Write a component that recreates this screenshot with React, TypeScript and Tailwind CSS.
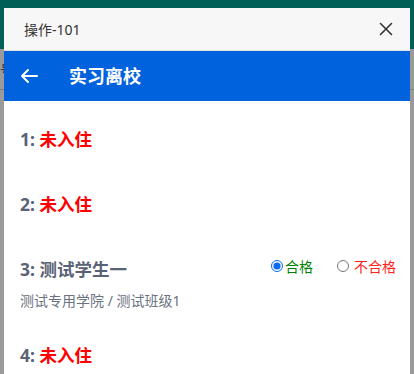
import React from "react";

const cjk = { fontFamily: '"Noto Sans", "Noto Sans CJK SC", sans-serif' };

function Row({ n, children, sub, right }: { n: number; children: React.ReactNode; sub?: string; right?: React.ReactNode }) {
  return (
    <div className={sub ? "pt-5 pb-3 border-b border-transparent" : "py-5 border-b border-transparent"}>
      <div className="flex items-center justify-between px-4">
        <div className="text-[17.5px] leading-6 font-bold text-[#596277]">
          {n}: {children}
        </div>
        {right}
      </div>
      {sub && <div className="mt-[11px] px-4 text-[14px] leading-[18px] text-[#6b7280]">{sub}</div>}
    </div>
  );
}

export default function App() {
  return (
    <div className="relative w-[414px] h-[374px] overflow-hidden bg-[#9a9a9a]" style={cjk}>
      <div className="h-[49px] bg-[#005f56]" />
      <div className="flex flex-col">
        <div className="h-[40px] flex items-center text-[14px] text-[#333]">号</div>
        <div className="h-px bg-[#7d7d7d]" />
      </div>
      <div className="absolute left-[4px] top-[8px] w-[406px] h-[400px] bg-white flex flex-col">
        <div className="h-[43px] bg-[#f7f7f7] border-b border-[#e2e2e2] flex items-center justify-between pl-5 pr-4">
          <span className="text-[14px] text-[#333]">操作-101</span>
          <svg width="14" height="14" viewBox="0 0 14 14" className="mr-[1px]">
            <path d="M1.5 1.5 L12.5 12.5 M12.5 1.5 L1.5 12.5" stroke="#333" strokeWidth="1.6" strokeLinecap="round" />
          </svg>
        </div>
        <div className="h-[50px] bg-[#0062dc] flex items-center pl-4">
          <svg width="18" height="16" viewBox="0 0 18 16">
            <path d="M17 8 H2 M8 2 L2 8 L8 14" stroke="white" strokeWidth="2" fill="none" strokeLinecap="round" strokeLinejoin="round" />
          </svg>
          <span className="ml-[31px] text-[18px] font-bold text-white">实习离校</span>
        </div>
        <div className="pt-[6px]">
          <Row n={1}><span className="text-[#ff0000]">未入住</span></Row>
          <Row n={2}><span className="text-[#ff0000]">未入住</span></Row>
          <Row
            n={3}
            sub="测试专用学院 / 测试班级1"
            right={
              <div className="flex items-center text-[14px] -mt-[6px] mr-[-2px]">
                <label className="flex items-center">
                  <input type="radio" name="r3" defaultChecked className="w-[12px] h-[12px] m-0 accent-[#0a6cf0]" />
                  <span className="ml-[2px] text-[#008000]">合格</span>
                </label>
                <label className="flex items-center ml-[24px]">
                  <input type="radio" name="r3" className="w-[12px] h-[12px] m-0" />
                  <span className="ml-[5px] text-[#ff2020]">不合格</span>
                </label>
              </div>
            }
          >
            测试学生一
          </Row>
          <Row n={4}><span className="text-[#ff0000]">未入住</span></Row>
        </div>
      </div>
    </div>
  );
}
